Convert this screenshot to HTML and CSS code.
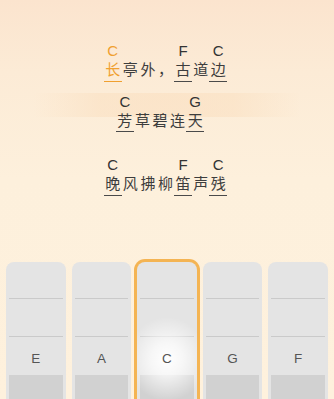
FILE: index.html
```html
<!DOCTYPE html>
<html lang="zh">
<head>
<meta charset="utf-8">
<link rel="stylesheet" href="styles.css">
</head>
<body>
<div class="app">
  <div class="band"></div>
  <div class="lyrics">
    <div class="line line-1">
      <div class="cell active"><span class="chord">C</span><span class="ch ul">长</span></div>
      <div class="cell"><span class="chord"></span><span class="ch">亭</span></div>
      <div class="cell"><span class="chord"></span><span class="ch">外</span></div>
      <div class="cell"><span class="chord"></span><span class="ch">，</span></div>
      <div class="cell"><span class="chord">F</span><span class="ch ul">古</span></div>
      <div class="cell"><span class="chord"></span><span class="ch">道</span></div>
      <div class="cell"><span class="chord">C</span><span class="ch ul">边</span></div>
    </div>
    <div class="line line-2">
      <div class="cell"><span class="chord">C</span><span class="ch ul">芳</span></div>
      <div class="cell"><span class="chord"></span><span class="ch">草</span></div>
      <div class="cell"><span class="chord"></span><span class="ch">碧</span></div>
      <div class="cell"><span class="chord"></span><span class="ch">连</span></div>
      <div class="cell"><span class="chord">G</span><span class="ch ul">天</span></div>
    </div>
    <div class="line line-3">
      <div class="cell"><span class="chord">C</span><span class="ch ul">晚</span></div>
      <div class="cell"><span class="chord"></span><span class="ch">风</span></div>
      <div class="cell"><span class="chord"></span><span class="ch">拂</span></div>
      <div class="cell"><span class="chord"></span><span class="ch">柳</span></div>
      <div class="cell"><span class="chord">F</span><span class="ch ul">笛</span></div>
      <div class="cell"><span class="chord"></span><span class="ch">声</span></div>
      <div class="cell"><span class="chord">C</span><span class="ch ul">残</span></div>
    </div>
  </div>
  <div class="keys">
    <div class="key"><div class="seg"></div><div class="seg seg-2"></div><div class="label">E</div><div class="base"></div></div>
    <div class="key"><div class="seg"></div><div class="seg seg-2"></div><div class="label">A</div><div class="base"></div></div>
    <div class="key selected"><div class="seg"></div><div class="seg seg-2"></div><div class="label">C</div><div class="base"></div></div>
    <div class="key"><div class="seg"></div><div class="seg seg-2"></div><div class="label">G</div><div class="base"></div></div>
    <div class="key"><div class="seg"></div><div class="seg seg-2"></div><div class="label">F</div><div class="base"></div></div>
  </div>
</div>
</body>
</html>
```

FILE: styles.css
```css
* { box-sizing: border-box; }
html, body {
  margin: 0;
  padding: 0;
  width: 334px;
  height: 399px;
  overflow: hidden;
}
body {
  font-family: "Noto Sans", "Noto Sans CJK SC", sans-serif;
  background: #fdf0dc;
}
.app {
  position: relative;
  width: 334px;
  height: 399px;
  overflow: hidden;
  background: linear-gradient(180deg, #fbe4ce 0%, #fcebd6 18%, #fdf0dc 45%, #fef1dd 100%);
  display: flex;
  flex-direction: column;
}
.band {
  position: absolute;
  left: 0;
  right: 0;
  top: 93px;
  height: 24px;
  background: linear-gradient(90deg, rgba(250,222,190,0) 10%, rgba(250,222,190,0.5) 30%, rgba(250,222,190,0.55) 50%, rgba(250,222,190,0.5) 70%, rgba(250,222,190,0) 90%);
}
.lyrics {
  position: relative;
  height: 262px;
  padding-top: 45px;
  display: flex;
  flex-direction: column;
  align-items: center;
}
.line {
  display: flex;
  margin-left: -3px;
}
.line-2 { margin-top: 14px; margin-left: -14px; }
.line-3 { margin-top: 27px; }
.cell {
  width: 17.6px;
  display: flex;
  flex-direction: column;
  align-items: center;
}
.chord {
  display: block;
  height: 12px;
  margin-bottom: 4px;
  font-family: "Liberation Sans", "Noto Sans", sans-serif;
  font-size: 15px;
  line-height: 12px;
  color: #333;
}
.ch {
  display: block;
  width: 18px;
  text-align: center;
  font-family: "Noto Sans CJK SC", sans-serif;
  font-size: 15px;
  line-height: 16px;
  height: 20.7px;
  color: #3d3d3d;
}
.ch.ul { border-bottom: 1.5px solid #4a4a4a; }
.active .chord, .active .ch { color: #f0a030; }
.active .ch.ul { border-bottom-color: #f0a030; }

.keys {
  display: flex;
  gap: 6px;
  padding: 0 6px;
  flex: 1;
}
.key {
  position: relative;
  flex: 1;
  background: #e4e4e4;
  border-radius: 8px 8px 0 0;
  padding: 0 3px;
  display: flex;
  flex-direction: column;
}
.seg {
  height: 37px;
  border-bottom: 1.5px solid #cacaca;
}
.seg-2 { height: 38px; }
.label {
  height: 38px;
  padding-top: 4px;
  display: flex;
  align-items: center;
  justify-content: center;
  font-family: "Liberation Sans", "Noto Sans", sans-serif;
  font-size: 13.5px;
  color: #555;
  position: relative;
  z-index: 1;
}
.base {
  flex: 1;
  background: #d1d1d1;
}
.selected {
  box-shadow: 0 0 0 3px #f4b453;
}
.selected::after {
  content: "";
  position: absolute;
  left: 0;
  right: 0;
  top: 45px;
  bottom: 0;
  background: radial-gradient(ellipse 40px 42px at 50% 52px, rgba(255,255,255,1) 0%, rgba(255,255,255,0.7) 40%, rgba(255,255,255,0) 100%);
  pointer-events: none;
}
```
